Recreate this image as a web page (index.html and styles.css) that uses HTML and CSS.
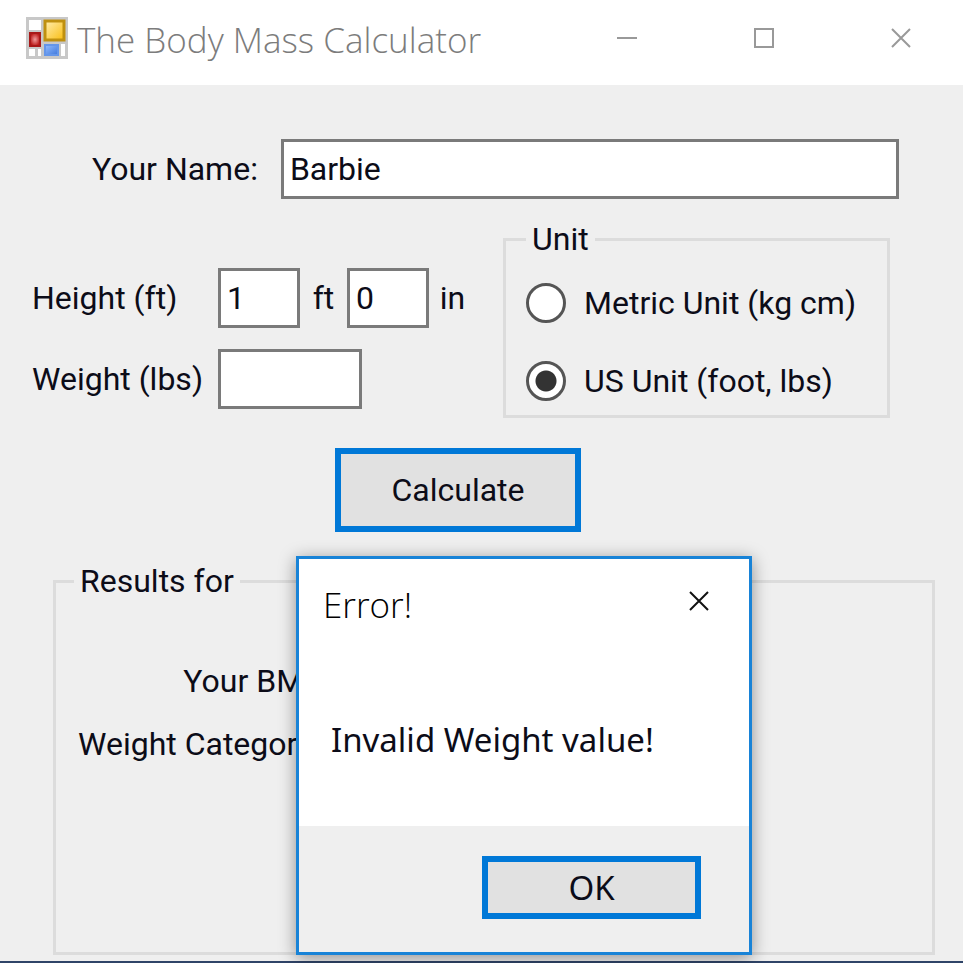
FILE: index.html
```html
<!DOCTYPE html>
<html lang="en">
<head>
<meta charset="utf-8">
<title>The Body Mass Calculator</title>
<link rel="stylesheet" href="styles.css">
</head>
<body>
<div class="window">
  <header class="titlebar">
    <svg class="app-icon" viewBox="0 0 42 42" aria-hidden="true">
      <defs>
        <linearGradient id="gold" x1="0" y1="0" x2="1" y2="1"><stop offset="0" stop-color="#ffedb0"/><stop offset="1" stop-color="#f9bd10"/></linearGradient>
        <radialGradient id="red"><stop offset="0" stop-color="#f09a9a"/><stop offset="1" stop-color="#bc1c1c"/></radialGradient>
        <linearGradient id="blue" x1="0" y1="0" x2="1" y2="1"><stop offset="0" stop-color="#93bcff"/><stop offset="1" stop-color="#3f78dc"/></linearGradient>
      </defs>
      <rect width="42" height="42" fill="#c8c8c8"/>
      <rect x="3" y="3" width="12" height="10" fill="#fff"/>
      <rect x="3" y="32" width="6" height="7" fill="#fff"/>
      <rect x="12" y="32" width="3" height="7" fill="#fff"/>
      <rect x="35" y="27" width="4" height="12" fill="#fff"/>
      <rect x="4" y="16" width="10" height="13" fill="url(#red)" stroke="#a81818" stroke-width="2"/>
      <rect x="19" y="4" width="19" height="19" fill="url(#gold)" stroke="#bf9010" stroke-width="3"/>
      <rect x="19" y="28" width="13" height="10" fill="url(#blue)" stroke="#6496ea" stroke-width="2"/>
    </svg>
    <h1 class="title">The Body Mass Calculator</h1>
    <div class="controls">
      <button type="button" class="control" aria-label="Minimize"><svg viewBox="0 0 20 20"><path d="M0 10H20"/></svg></button>
      <button type="button" class="control" aria-label="Maximize"><svg viewBox="0 0 20 20"><path d="M1 1H19V19H1Z"/></svg></button>
      <button type="button" class="control" aria-label="Close"><svg viewBox="0 0 20 20"><path d="M1 1L19 19M19 1L1 19"/></svg></button>
    </div>
  </header>

  <form class="form">
    <div class="name-row">
      <label for="name">Your Name:</label>
      <input class="field name" id="name" type="text" value="Barbie">
    </div>

    <div class="details">
      <div class="measures">
        <div class="measure">
          <label class="measure-label" for="feet">Height (ft)</label>
          <input class="field small" id="feet" type="text" value="1">
          <label class="suffix" for="feet">ft</label>
          <input class="field small" id="inches" type="text" value="0">
          <label class="suffix" for="inches">in</label>
        </div>
        <div class="measure">
          <label class="measure-label" for="weight">Weight (lbs)</label>
          <input class="field weight" id="weight" type="text">
        </div>
      </div>
      <fieldset class="group units">
        <legend>Unit</legend>
        <label class="option"><input type="radio" name="unit">Metric Unit (kg cm)</label>
        <label class="option"><input type="radio" name="unit" checked>US Unit (foot, lbs)</label>
      </fieldset>
    </div>

    <div class="actions">
      <button type="button" class="button calculate">Calculate</button>
    </div>

    <fieldset class="group results">
      <legend>Results for</legend>
      <div class="result-labels">
        <span>Your BMI:</span>
        <span>Weight Category:</span>
      </div>
    </fieldset>
  </form>

  <section class="dialog" role="dialog" aria-labelledby="dialog-title">
    <header class="dialog-head">
      <h2 class="title dialog-title" id="dialog-title">Error!</h2>
      <button type="button" class="control dialog-close" aria-label="Close"><svg viewBox="0 0 20 20"><path d="M1 1L19 19M19 1L1 19"/></svg></button>
    </header>
    <p class="message">Invalid Weight value!</p>
    <footer class="dialog-foot">
      <button type="button" class="button ok">OK</button>
    </footer>
  </section>
</div>
</body>
</html>
```
FILE: styles.css
```css
* { box-sizing: border-box; }

body {
  margin: 0;
  background: #efefef;
  color: #0c0c18;
  font: 32px/36px Roboto, "Liberation Sans", sans-serif;
}

input, button { font: inherit; color: inherit; }

.window {
  position: relative;
  display: flex;
  flex-direction: column;
  min-height: 100vh;
  border-bottom: 2px solid #2f4468;
}

.titlebar {
  display: flex;
  align-items: center;
  height: 85px;
  padding: 0 0 10px 26px;
  background: #fff;
}

.app-icon { width: 42px; height: 42px; }

.title {
  margin: 0;
  font: 300 35px/48px "Open Sans", "Noto Sans", sans-serif;
}

.titlebar .title {
  flex: 1;
  margin-left: 9px;
  padding-top: 4px;
  color: #7c7c7c;
  white-space: nowrap;
}

.controls { display: flex; gap: 12px; color: #999; }

.control {
  display: flex;
  align-items: center;
  justify-content: center;
  width: 125px;
  height: 48px;
  padding: 0;
  border: 0;
  background: none;
}

.control svg {
  width: 20px;
  height: 20px;
  fill: none;
  stroke: currentColor;
  stroke-width: 2;
}

.form {
  flex: 1;
  display: flex;
  flex-direction: column;
  padding: 54px 28px 6px 32px;
}

.field {
  height: 60px;
  padding: 0 6px;
  border: 3px solid #7a7a7a;
  border-radius: 0;
  background: #fff;
  min-width: 0;
}

.name-row {
  display: flex;
  align-items: center;
  gap: 23px;
  margin: 0 36px 0 60px;
}

.name { flex: 1; }

.details {
  display: flex;
  margin: 22px 45px 0 0;
}

.measures {
  display: flex;
  flex-direction: column;
  gap: 21px;
  width: 471px;
  padding-top: 47px;
}

.measure { display: flex; align-items: center; white-space: nowrap; }
.measure-label { width: 186px; }
.small { width: 82px; }
.weight { width: 144px; }
.suffix { width: 47px; text-align: center; }

.group {
  margin: 0;
  border: 3px solid #dcdcdc;
  min-width: 0;
}

.group legend { padding: 0 6px; }

.units {
  flex: 1;
  padding: 26px 18px 14px 20px;
  display: flex;
  flex-direction: column;
  gap: 38px;
}

.option {
  display: flex;
  align-items: center;
  gap: 18px;
  height: 40px;
  white-space: nowrap;
}

.option input {
  appearance: none;
  flex: none;
  width: 40px;
  height: 40px;
  margin: 0;
  border: 3px solid #555;
  border-radius: 50%;
  background: #fff;
}

.option input:checked {
  background: radial-gradient(circle, #333 10px, #fff 11px);
}

.actions {
  display: flex;
  justify-content: center;
  padding: 30px 51px 31px 0;
}

.button {
  padding: 0;
  border: 6px solid #0078d7;
  border-radius: 0;
  background: #e1e1e1;
}

.calculate { width: 246px; height: 84px; }

.results {
  flex: 1;
  margin-left: 21px;
  padding: 64px 0 0 22px;
}

.results legend { margin-left: -4px; }

.result-labels {
  display: flex;
  flex-direction: column;
  gap: 27px;
  width: max-content;
  text-align: right;
}

.dialog {
  position: absolute;
  left: 296px;
  bottom: 6px;
  width: 456px;
  border: 3px solid #1883d7;
  background: #fff;
  box-shadow: 0 3px 16px rgba(0, 0, 0, 0.4);
}

.dialog-head {
  display: flex;
  align-items: flex-start;
  justify-content: space-between;
  padding: 18px 0 0 24px;
}

.dialog-title { padding-top: 4px; color: #000; }

.control.dialog-close { width: 100px; color: #111; }

.message {
  margin: 0;
  padding: 93px 32px 68px;
  font: 33px/36px "Noto Sans", "Open Sans", sans-serif;
}

.dialog-foot {
  display: flex;
  justify-content: flex-end;
  padding: 30px 48px 33px;
  background: #efefef;
}

.ok {
  width: 219px;
  height: 63px;
  font: 33px/36px "Noto Sans", "Open Sans", sans-serif;
}
```
